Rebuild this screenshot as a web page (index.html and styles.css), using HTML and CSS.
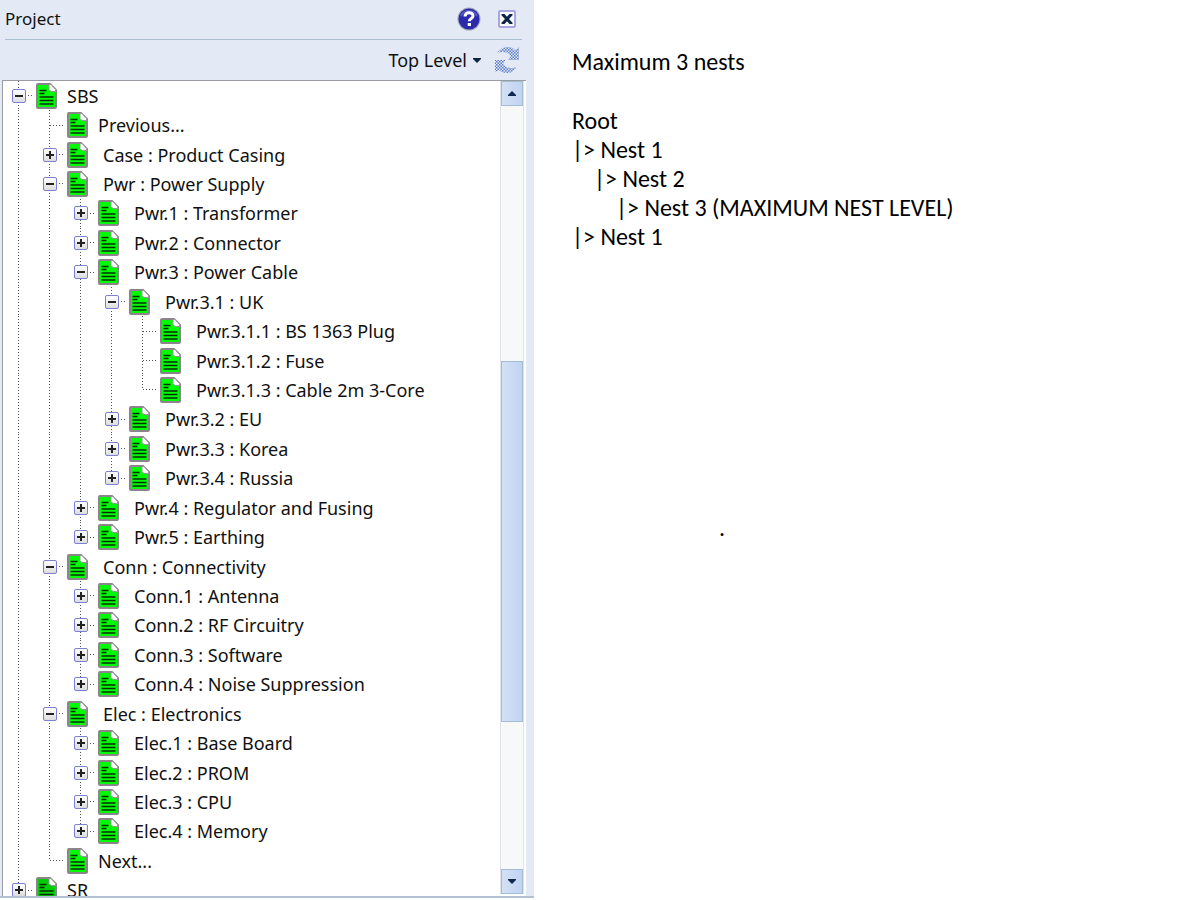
FILE: index.html
```
<!DOCTYPE html>
<html lang="en">
<head>
<meta charset="utf-8">
<title>Project</title>
<link rel="stylesheet" href="styles.css">
</head>
<body>
<aside class="panel">
  <header class="panel-head">
    <h1>Project</h1>
    <button class="icon-button" aria-label="Help"><svg width="24" height="24" viewBox="0 0 24 24"><circle cx="12" cy="12" r="11.500" fill="#a3a5b8"/><circle cx="12" cy="12" r="10.500" fill="#2a2aaa"/><path d="M4 9a9 9 0 0 1 16 0" fill="none" stroke="#5555c4" stroke-width="2"/><path d="M8 9.500C8 4.500 16 4.500 16 9c0 2.500-3.700 2.500-3.700 5.200" fill="none" stroke="#fff" stroke-width="3"/><path d="M10.700 16h3.300v3h-3.300z" fill="#fff"/></svg></button>
    <button class="icon-button" aria-label="Close"><svg width="18" height="18" viewBox="0 0 18 18"><rect x="1" y="1" width="16" height="16" rx="1" fill="#f5f7fb" stroke="#938fd8" stroke-width="1.500"/><path d="M3.500 4h3L9 6.800 11.500 4h3v1.200L11 9l3.500 3.800V14h-3L9 11.200 6.500 14h-3v-1.200L7 9 3.500 5.200z" fill="#0b2444"/></svg></button>
  </header>
  <div class="toolbar">
    <button class="menu-button">Top Level <svg width="8" height="5" viewBox="0 0 8 5"><path d="M0 0h8v1L4 5 0 1z" fill="#0b2444"/></svg></button>
    <button class="icon-button" aria-label="Refresh" disabled><svg width="28" height="28" viewBox="0 0 28 28"><defs><pattern id="mesh" width="3" height="3" patternUnits="userSpaceOnUse"><path d="M0 0h1.500v1.500H0zM1.500 1.500H3V3H1.500z" fill="#5b7cc8"/></pattern></defs><path d="M4 7C7 3 10 1 14 1c4 0 6 1 8 3l4-3v13H15l3-4C15 6 10 5 4 7z" fill="url(#mesh)"/><path d="M24 21c-3 4-6 6-10 6-4 0-6-1-8-3l-4 2V14h11l-3 4c3 4 8 5 14 3z" fill="url(#mesh)"/></svg></button>
  </div>
  <div class="view">
    <svg class="defs" aria-hidden="true"><symbol id="doc" viewBox="0 0 21 26"><path d="M1 2q0-1 1-1h12l6 6v17q0 1-1 1H2q-1 0-1-1z" fill="currentColor" stroke="#8b858b" stroke-width="2" stroke-linejoin="round"/><path d="M13 1.500h2l4.500 5v2H15l-2-2z" fill="#fff" stroke="#9a969c"/><path d="M3.500 7.500h7M3.500 10.500h5M3.500 14h14M3.500 17.500h14M3.500 21h14" stroke="#052c05" stroke-width="1.500"/></symbol></svg>
    <ul class="tree" role="tree">
      <li class="row level-0 short" role="treeitem" aria-level="1"><span class="guides"></span><span class="joint"><button class="toggle minus" aria-label="Collapse"></button></span><svg class="doc"><use href="#doc"/></svg><span class="name">SBS</span></li>
      <li class="row level-1 short" role="treeitem" aria-level="2"><span class="guides"></span><span class="joint"></span><svg class="doc"><use href="#doc"/></svg><span class="name">Previous...</span></li>
      <li class="row level-1" role="treeitem" aria-level="2"><span class="guides"></span><span class="joint"><button class="toggle" aria-label="Expand"></button></span><svg class="doc"><use href="#doc"/></svg><span class="name">Case : Product Casing</span></li>
      <li class="row level-1" role="treeitem" aria-level="2"><span class="guides"></span><span class="joint"><button class="toggle minus" aria-label="Collapse"></button></span><svg class="doc"><use href="#doc"/></svg><span class="name">Pwr : Power Supply</span></li>
      <li class="row level-2" role="treeitem" aria-level="3"><span class="guides"></span><span class="joint"><button class="toggle" aria-label="Expand"></button></span><svg class="doc"><use href="#doc"/></svg><span class="name">Pwr.1 : Transformer</span></li>
      <li class="row level-2" role="treeitem" aria-level="3"><span class="guides"></span><span class="joint"><button class="toggle" aria-label="Expand"></button></span><svg class="doc"><use href="#doc"/></svg><span class="name">Pwr.2 : Connector</span></li>
      <li class="row level-2" role="treeitem" aria-level="3"><span class="guides"></span><span class="joint"><button class="toggle minus" aria-label="Collapse"></button></span><svg class="doc"><use href="#doc"/></svg><span class="name">Pwr.3 : Power Cable</span></li>
      <li class="row level-3" role="treeitem" aria-level="4"><span class="guides"></span><span class="joint"><button class="toggle minus" aria-label="Collapse"></button></span><svg class="doc"><use href="#doc"/></svg><span class="name">Pwr.3.1 : UK</span></li>
      <li class="row level-4" role="treeitem" aria-level="5"><span class="guides"></span><span class="joint"></span><svg class="doc"><use href="#doc"/></svg><span class="name">Pwr.3.1.1 : BS 1363 Plug</span></li>
      <li class="row level-4" role="treeitem" aria-level="5"><span class="guides"></span><span class="joint"></span><svg class="doc"><use href="#doc"/></svg><span class="name">Pwr.3.1.2 : Fuse</span></li>
      <li class="row level-4 last" role="treeitem" aria-level="5"><span class="guides"></span><span class="joint"></span><svg class="doc"><use href="#doc"/></svg><span class="name">Pwr.3.1.3 : Cable 2m 3-Core</span></li>
      <li class="row level-3" role="treeitem" aria-level="4"><span class="guides"></span><span class="joint"><button class="toggle" aria-label="Expand"></button></span><svg class="doc"><use href="#doc"/></svg><span class="name">Pwr.3.2 : EU</span></li>
      <li class="row level-3" role="treeitem" aria-level="4"><span class="guides"></span><span class="joint"><button class="toggle" aria-label="Expand"></button></span><svg class="doc"><use href="#doc"/></svg><span class="name">Pwr.3.3 : Korea</span></li>
      <li class="row level-3 last" role="treeitem" aria-level="4"><span class="guides"></span><span class="joint"><button class="toggle" aria-label="Expand"></button></span><svg class="doc"><use href="#doc"/></svg><span class="name">Pwr.3.4 : Russia</span></li>
      <li class="row level-2" role="treeitem" aria-level="3"><span class="guides"></span><span class="joint"><button class="toggle" aria-label="Expand"></button></span><svg class="doc"><use href="#doc"/></svg><span class="name">Pwr.4 : Regulator and Fusing</span></li>
      <li class="row level-2 last" role="treeitem" aria-level="3"><span class="guides"></span><span class="joint"><button class="toggle" aria-label="Expand"></button></span><svg class="doc"><use href="#doc"/></svg><span class="name">Pwr.5 : Earthing</span></li>
      <li class="row level-1" role="treeitem" aria-level="2"><span class="guides"></span><span class="joint"><button class="toggle minus" aria-label="Collapse"></button></span><svg class="doc"><use href="#doc"/></svg><span class="name">Conn : Connectivity</span></li>
      <li class="row level-2" role="treeitem" aria-level="3"><span class="guides"></span><span class="joint"><button class="toggle" aria-label="Expand"></button></span><svg class="doc"><use href="#doc"/></svg><span class="name">Conn.1 : Antenna</span></li>
      <li class="row level-2" role="treeitem" aria-level="3"><span class="guides"></span><span class="joint"><button class="toggle" aria-label="Expand"></button></span><svg class="doc"><use href="#doc"/></svg><span class="name">Conn.2 : RF Circuitry</span></li>
      <li class="row level-2" role="treeitem" aria-level="3"><span class="guides"></span><span class="joint"><button class="toggle" aria-label="Expand"></button></span><svg class="doc"><use href="#doc"/></svg><span class="name">Conn.3 : Software</span></li>
      <li class="row level-2 last" role="treeitem" aria-level="3"><span class="guides"></span><span class="joint"><button class="toggle" aria-label="Expand"></button></span><svg class="doc"><use href="#doc"/></svg><span class="name">Conn.4 : Noise Suppression</span></li>
      <li class="row level-1" role="treeitem" aria-level="2"><span class="guides"></span><span class="joint"><button class="toggle minus" aria-label="Collapse"></button></span><svg class="doc"><use href="#doc"/></svg><span class="name">Elec : Electronics</span></li>
      <li class="row level-2" role="treeitem" aria-level="3"><span class="guides"></span><span class="joint"><button class="toggle" aria-label="Expand"></button></span><svg class="doc"><use href="#doc"/></svg><span class="name">Elec.1 : Base Board</span></li>
      <li class="row level-2" role="treeitem" aria-level="3"><span class="guides"></span><span class="joint"><button class="toggle" aria-label="Expand"></button></span><svg class="doc"><use href="#doc"/></svg><span class="name">Elec.2 : PROM</span></li>
      <li class="row level-2" role="treeitem" aria-level="3"><span class="guides"></span><span class="joint"><button class="toggle" aria-label="Expand"></button></span><svg class="doc"><use href="#doc"/></svg><span class="name">Elec.3 : CPU</span></li>
      <li class="row level-2 last" role="treeitem" aria-level="3"><span class="guides"></span><span class="joint"><button class="toggle" aria-label="Expand"></button></span><svg class="doc"><use href="#doc"/></svg><span class="name">Elec.4 : Memory</span></li>
      <li class="row level-1 short last" role="treeitem" aria-level="2"><span class="guides"></span><span class="joint"></span><svg class="doc"><use href="#doc"/></svg><span class="name">Next...</span></li>
      <li class="row level-0 short dark" role="treeitem" aria-level="1"><span class="guides"></span><span class="joint"><button class="toggle" aria-label="Expand"></button></span><svg class="doc"><use href="#doc"/></svg><span class="name">SR</span></li>
    </ul>
    <div class="scrollbar">
      <button class="step" aria-label="Scroll up"><svg width="8" height="5" viewBox="0 0 8 5"><path d="M0 5h8V4L4 0 0 4z" fill="#10294f"/></svg></button>
      <div class="track"><div class="thumb"></div></div>
      <button class="step" aria-label="Scroll down"><svg width="8" height="5" viewBox="0 0 8 5"><path d="M0 0h8v1L4 5 0 1z" fill="#10294f"/></svg></button>
    </div>
  </div>
</aside>
<main class="notes">
  <p class="gap">Maximum 3 nests</p>
  <p>Root</p>
  <p>|&gt; Nest 1</p>
  <p class="in-1">|&gt; Nest 2</p>
  <p class="in-2">|&gt; Nest 3 (MAXIMUM NEST LEVEL)</p>
  <p>|&gt; Nest 1</p>
  <p class="dot">.</p>
</main>
</body>
</html>
```
FILE: styles.css
```
* { box-sizing: border-box; }
body {
  margin: 0;
  display: flex;
  align-items: flex-start;
  background: #fff;
  color: #111;
  font: 18px/24px "Noto Sans", "Open Sans", sans-serif;
}
button {
  margin: 0;
  padding: 0;
  border: 0;
  background: none;
  color: inherit;
  font: inherit;
}
svg { display: block; }
.defs { position: absolute; width: 0; height: 0; }

.panel {
  width: 44.5%;
  height: calc(100vh - 2px);
  display: flex;
  flex-direction: column;
  background: #e3eaf5;
  border-bottom: 2px solid #b3c2d3;
}
.panel-head {
  height: 40px;
  margin: 0 12px 0 5px;
  padding: 0 6px 1px 0;
  display: flex;
  align-items: center;
  gap: 17px;
  border-bottom: 1px solid #a9bfd2;
}
.panel-head h1 {
  margin: 0 auto 0 0;
  font-size: 17px;
  font-weight: 400;
}
.toolbar {
  height: 40px;
  padding-right: 13px;
  display: flex;
  align-items: center;
  justify-content: flex-end;
  gap: 12px;
}
.menu-button { display: flex; align-items: center; gap: 6px; }

.view {
  flex: 1;
  min-height: 0;
  margin: 0 8px 0 2px;
  display: flex;
  overflow: hidden;
  background: #fff;
  border: solid #999ca3;
  border-width: 1px 0 0 1px;
  padding-right: 2px;
}
.tree {
  flex: 1;
  list-style: none;
  padding: 0;
  margin: 0 0 -9px;
  display: grid;
  grid-auto-rows: minmax(0, 1fr);
}
.row { display: flex; align-items: center; color: #111; }
.level-0 { --level: 0; }
.level-1 { --level: 1; }
.level-2 { --level: 2; }
.level-3 { --level: 3; }
.level-4 { --level: 4; }
.guides {
  align-self: stretch;
  width: calc(31px * var(--level));
  background: linear-gradient(to right, transparent 15px, #555 15px 16px, transparent 16px) 0 0 / 31px 100%;
  -webkit-mask: repeating-linear-gradient(#000 0 1px, transparent 1px 3px);
  mask: repeating-linear-gradient(#000 0 1px, transparent 1px 3px);
}
.joint {
  align-self: stretch;
  width: 33px;
  display: flex;
  align-items: center;
  padding-left: 9px;
  background:
    repeating-linear-gradient(#555 0 1px, transparent 1px 3px) 15px 0 / 1px 100% no-repeat,
    repeating-linear-gradient(to right, #555 0 1px, transparent 1px 3px) 16px 50% / 14px 1px no-repeat;
}
.last .joint { background-size: 1px 50%, 14px 1px; }
.toggle {
  width: 14px;
  height: 14px;
  border: 1px solid #7d7fd4;
  border-radius: 2px;
  background:
    linear-gradient(#222, #222) center / 8px 2px no-repeat,
    linear-gradient(#222, #222) center / 2px 8px no-repeat,
    linear-gradient(#fff, #ddd);
}
.toggle.minus {
  background:
    linear-gradient(#222, #222) center / 8px 2px no-repeat,
    linear-gradient(#fff, #ddd);
}
.doc { width: 21px; height: 26px; color: #00fc04; }
.dark .doc { color: #00cc08; }
.name { margin-left: 15px; white-space: nowrap; }
.short .name { margin-left: 10px; }

.scrollbar {
  width: 24px;
  display: flex;
  flex-direction: column;
  background: #f7f8fa;
  border: solid #dfe3e8;
  border-width: 0 1px;
  margin-bottom: 2px;
}
.step, .thumb {
  border: 1px solid #a3bbd3;
  background: linear-gradient(to right, #d3e1f5, #c0d3f1);
}
.step {
  flex: 0 0 25px;
  display: flex;
  align-items: center;
  justify-content: center;
}
.track {
  flex: 1;
  display: grid;
  grid-template-rows: 255fr 362fr 147fr;
}
.thumb { grid-row: 2; }

.notes {
  flex: 1;
  padding: 47px 0 0 38px;
  color: #000;
  font: 24px/29px Carlito, Lato, sans-serif;
}
.notes p { margin: 0; }
.notes .gap { margin-bottom: 30px; }
.notes .in-1 { padding-left: 22px; }
.notes .in-2 { padding-left: 44px; }
.notes .dot { padding: 262px 0 0 147px; }
```
